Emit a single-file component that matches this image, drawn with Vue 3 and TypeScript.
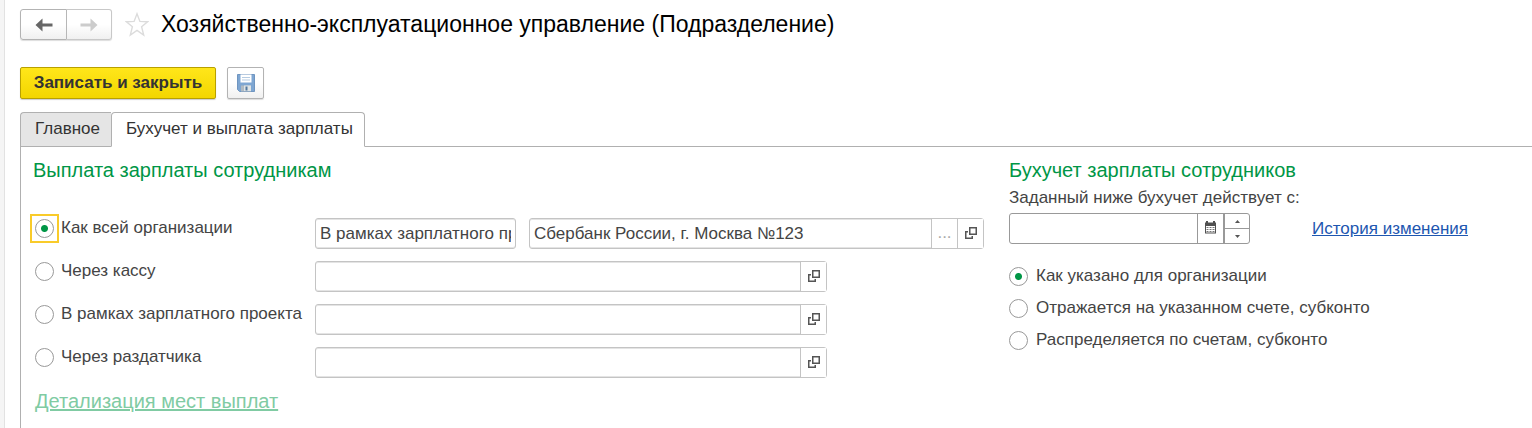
<script setup lang="ts">
import { ref } from 'vue'

interface Option {
  id: string
  label: string
}

const payOptions: Option[] = [
  { id: 'org', label: 'Как всей организации' },
  { id: 'cash', label: 'Через кассу' },
  { id: 'project', label: 'В рамках зарплатного проекта' },
  { id: 'courier', label: 'Через раздатчика' },
]

const accountingOptions: Option[] = [
  { id: 'as-org', label: 'Как указано для организации' },
  { id: 'account', label: 'Отражается на указанном счете, субконто' },
  { id: 'split', label: 'Распределяется по счетам, субконто' },
]

const payMode = ref('org')
const accountingMode = ref('as-org')
const method = ref('В рамках зарплатного проекта')
const bank = ref('Сбербанк России, г. Москва №123')
const startDate = ref('')
const places = ref<Record<string, string>>({ cash: '', project: '', courier: '' })
</script>

<template>
  <div class="window">
    <header class="header">
      <div class="nav">
        <button type="button" class="nav-btn" aria-label="Назад">
          <svg width="18" height="14" viewBox="0 0 18 14"><path d="M0.5 7 7.5 0.5V5.4H17.5V8.6H7.5V13.5Z" fill="#666" /></svg>
        </button>
        <button type="button" class="nav-btn" aria-label="Вперед" disabled>
          <svg width="18" height="14" viewBox="0 0 18 14"><path d="M17.5 7 10.5 0.5V5.4H0.5V8.6H10.5V13.5Z" fill="#ccc" /></svg>
        </button>
      </div>
      <button type="button" class="star" aria-label="В избранное">
        <svg width="24" height="25" viewBox="0 0 24 25"><path d="M12 1.8 14.9 9.4 22.6 9.7 16.6 14.7 18.7 23 12 18.4 5.3 23 7.4 14.7 1.4 9.7 9.1 9.4Z" fill="#fff" stroke="#dcdcdc" stroke-width="1.4" /></svg>
      </button>
      <h1 class="title">Хозяйственно-эксплуатационное управление (Подразделение)</h1>
    </header>

    <div class="toolbar">
      <button type="button" class="primary">Записать и закрыть</button>
      <button type="button" class="save" aria-label="Записать">
        <svg width="18" height="18" viewBox="0 0 18 18">
          <path d="M0.5 0.5H17.5V17.5H2.5L0.5 15.5Z" fill="#7ea6d2" stroke="#6f95c0" />
          <rect x="3.5" y="0.5" width="11" height="8" fill="#fff" />
          <path d="M5 3.5H13M5 6H13" stroke="#b5cbe2" />
          <rect x="4" y="11.5" width="10" height="6" fill="#b0bac2" />
          <rect x="7" y="11.5" width="7" height="5.5" fill="#dfe4e5" />
          <rect x="8.5" y="12.5" width="2" height="4" fill="#53789f" />
        </svg>
      </button>
    </div>

    <div class="tabs" role="tablist">
      <button type="button" class="tab" role="tab" aria-selected="false">Главное</button>
      <button type="button" class="tab active" role="tab" aria-selected="true">Бухучет и выплата зарплаты</button>
      <div class="tab-rest"></div>
    </div>

    <main class="panel">
      <section class="pay">
        <h2 class="heading">Выплата зарплаты сотрудникам</h2>
        <div class="pay-rows">
          <div v-for="o in payOptions" :key="o.id" class="pay-row">
            <div class="choice">
              <span class="ring" :class="{ focused: payMode === o.id }">
                <input :id="'pay-' + o.id" v-model="payMode" type="radio" name="pay" class="radio" :value="o.id" />
              </span>
              <label :for="'pay-' + o.id">{{ o.label }}</label>
            </div>
            <div v-if="o.id === 'org'" class="fields">
              <div class="field method">
                <input v-model="method" type="text" aria-label="Способ выплаты" />
              </div>
              <div class="field bank">
                <input v-model="bank" type="text" aria-label="Банк" />
                <button type="button" class="field-btn dots" aria-label="Выбрать">...</button>
                <button type="button" class="field-btn" aria-label="Открыть">
                  <svg width="12" height="12" viewBox="0 0 12 12"><path d="M4.75 0.75H11.25V7.25H4.75ZM3 4.75H0.75V11.25H7.25V9" fill="none" stroke="#555" stroke-width="1.5" /></svg>
                </button>
              </div>
            </div>
            <div v-else class="field place">
              <input v-model="places[o.id]" type="text" :aria-label="o.label" />
              <button type="button" class="field-btn" aria-label="Открыть">
                <svg width="12" height="12" viewBox="0 0 12 12"><path d="M4.75 0.75H11.25V7.25H4.75ZM3 4.75H0.75V11.25H7.25V9" fill="none" stroke="#555" stroke-width="1.5" /></svg>
              </button>
            </div>
          </div>
        </div>
        <a href="#" class="detail">Детализация мест выплат</a>
      </section>

      <section class="accounting">
        <h2 class="heading">Бухучет зарплаты сотрудников</h2>
        <label for="start-date" class="date-label">Заданный ниже бухучет действует с:</label>
        <div class="date-row">
          <div class="field date">
            <input id="start-date" v-model="startDate" type="text" />
            <button type="button" class="field-btn" aria-label="Календарь">
              <svg width="13" height="13" viewBox="0 0 13 13">
                <path d="M1 1.5H12V12.5H1Z" fill="#505050" />
                <path d="M3 0V3M10 0V3" stroke="#505050" stroke-width="2" />
                <path d="M2 5H11V11.5H2Z" fill="#fff" />
                <path d="M2.5 6.5H4.5M5.5 6.5H7.5M8.5 6.5H10.5M2.5 8.5H4.5M5.5 8.5H7.5M8.5 8.5H10.5M2.5 10.5H4.5M5.5 10.5H7.5M8.5 10.5H10.5" stroke="#777" />
              </svg>
            </button>
            <div class="spin">
              <button type="button" aria-label="Больше"><svg width="5" height="3" viewBox="0 0 5 3"><path d="M0 3 2.5 0 5 3Z" fill="#555" /></svg></button>
              <button type="button" aria-label="Меньше"><svg width="5" height="3" viewBox="0 0 5 3"><path d="M0 0 2.5 3 5 0Z" fill="#555" /></svg></button>
            </div>
          </div>
          <a href="#" class="history">История изменения</a>
        </div>
        <div class="acc-rows">
          <div v-for="o in accountingOptions" :key="o.id" class="acc-row">
            <input :id="'acc-' + o.id" v-model="accountingMode" type="radio" name="accounting" class="radio" :value="o.id" />
            <label :for="'acc-' + o.id">{{ o.label }}</label>
          </div>
        </div>
      </section>
    </main>
  </div>
</template>

<style>
html,
body {
  height: 100%;
  background: #fff;
}
body {
  margin: 0;
}
#app {
  height: 100%;
}
</style>

<style scoped>
.window {
  box-sizing: border-box;
  min-height: 100%;
  display: flex;
  flex-direction: column;
  border-left: 4px solid #f5f5f5;
  box-shadow: inset 1px 0 #e2e2e2;
  padding: 9px 0 0 16px;
  font-family: "Liberation Sans", Arial, sans-serif;
  font-size: 17px;
  line-height: 20px;
  color: #444;
}
button,
input {
  font: inherit;
  color: inherit;
  margin: 0;
  padding: 0;
  box-sizing: border-box;
}
button {
  display: flex;
  align-items: center;
  justify-content: center;
}
h1,
h2 {
  margin: 0;
  font-weight: 400;
}
svg {
  display: block;
  flex: none;
}
.header {
  display: flex;
  align-items: center;
  height: 31px;
}
.nav {
  display: flex;
}
.nav-btn {
  width: 47px;
  height: 31px;
  border: 1px solid #b3b3b3;
  border-radius: 3px 0 0 3px;
  background: linear-gradient(#fff 50%, #f0f0f0);
  box-shadow: 0 1px 1px #ddd;
}
.nav-btn + .nav-btn {
  width: 45px;
  border-color: #c8c8c8;
  border-left: 0;
  border-radius: 0 3px 3px 0;
}
.star {
  border: 0;
  background: none;
  margin: 0 12px 0 13px;
}
.title {
  font-size: 23px;
  line-height: 28px;
  padding-bottom: 2px;
  color: #000;
  white-space: nowrap;
}
.toolbar {
  display: flex;
  gap: 11px;
  margin-top: 27px;
}
.primary {
  width: 196px;
  height: 32px;
  border: 1px solid #b8a000;
  border-radius: 2px;
  background: linear-gradient(#ffe61a, #f3d600);
  box-shadow: 0 1px 1px #ccc;
  font-weight: 700;
  color: #333;
}
.save {
  width: 37px;
  height: 32px;
  border: 1px solid #b3b3b3;
  border-radius: 2px;
  background: linear-gradient(#fff 50%, #f0f0f0);
  box-shadow: 0 1px 1px #ddd;
}
.tabs {
  display: flex;
  margin-top: 13px;
}
.tab {
  height: 35px;
  padding: 0 11px 2px 14px;
  border: 1px solid #b0b0b0;
  border-right: 0;
  border-radius: 4px 0 0 0;
  background: #e5e5e5;
  color: #333;
  white-space: nowrap;
}
.tab.active {
  border-right: 1px solid #b0b0b0;
  border-bottom-color: #fff;
  border-radius: 4px 4px 0 0;
  background: #fff;
}
.tab-rest {
  flex: 1;
  border-bottom: 1px solid #b0b0b0;
}
.panel {
  flex: 1;
  display: grid;
  grid-template-columns: minmax(0, 954fr) minmax(0, 523fr);
  column-gap: 25px;
  border-left: 1px solid #b0b0b0;
  padding: 11px 0 12px 9px;
}
.heading {
  font-size: 20px;
  line-height: 24px;
  color: #009646;
}
.pay .heading {
  padding-left: 3px;
}
.pay-rows {
  display: flex;
  flex-direction: column;
  gap: 12px;
  margin-top: 36px;
}
.pay-row {
  display: grid;
  grid-template-columns: 285px minmax(0, 1fr);
  align-items: start;
  height: 31px;
}
.choice {
  display: flex;
  align-items: center;
  gap: 2px;
  height: 20px;
}
.ring {
  box-sizing: border-box;
  flex: none;
  display: flex;
  align-items: center;
  justify-content: center;
  width: 29px;
  height: 29px;
  border: 2px solid transparent;
}
.ring.focused {
  border-color: #f9cb2a;
}
.radio {
  appearance: none;
  flex: none;
  width: 19px;
  height: 19px;
  border: 1px solid #999;
  border-radius: 50%;
  background: #fff;
  outline: none;
}
.radio:checked {
  background: radial-gradient(circle, #009646 3px, #fff 4px);
}
.fields {
  display: grid;
  grid-template-columns: minmax(0, 201fr) minmax(0, 455fr);
  gap: 13px;
}
.field {
  display: flex;
  box-sizing: border-box;
  height: 31px;
  border: 1px solid #c4c4c4;
  border-radius: 3px;
  background: #fff;
  box-shadow: inset 0 1px #e4e4e4, inset 0 -1px #e4e4e4;
}
.field > input {
  flex: 1;
  min-width: 0;
  border: 0;
  background: none;
  outline: none;
  margin: 0 4px;
}
.place {
  max-width: 512px;
}
.field-btn {
  flex: none;
  width: 26px;
  border: 0;
  border-left: 1px solid #c4c4c4;
  background: #fff;
  padding-bottom: 2px;
}
.dots {
  color: #aaa;
}
.detail {
  display: inline-block;
  margin: 11px 0 0 5px;
  font-size: 20px;
  line-height: 24px;
  color: #80cba3;
}
.date-label {
  display: block;
  margin-top: 6px;
}
.date-row {
  display: flex;
  align-items: center;
  gap: 62px;
  margin-top: 5px;
}
.date {
  width: 241px;
  border-color: #999;
  box-shadow: none;
}
.date .field-btn {
  border-color: #999;
}
.spin {
  flex: none;
  display: flex;
  flex-direction: column;
  width: 26px;
  border-left: 2px solid #999;
  box-sizing: border-box;
}
.spin button {
  flex: 1;
  border: 0;
  background: none;
}
.spin button + button {
  border-top: 1px solid #999;
}
.history {
  color: #1d56b0;
  white-space: nowrap;
}
.acc-rows {
  display: flex;
  flex-direction: column;
  gap: 12px;
  margin-top: 22px;
}
.acc-row {
  display: flex;
  align-items: center;
  gap: 8px;
}
</style>
